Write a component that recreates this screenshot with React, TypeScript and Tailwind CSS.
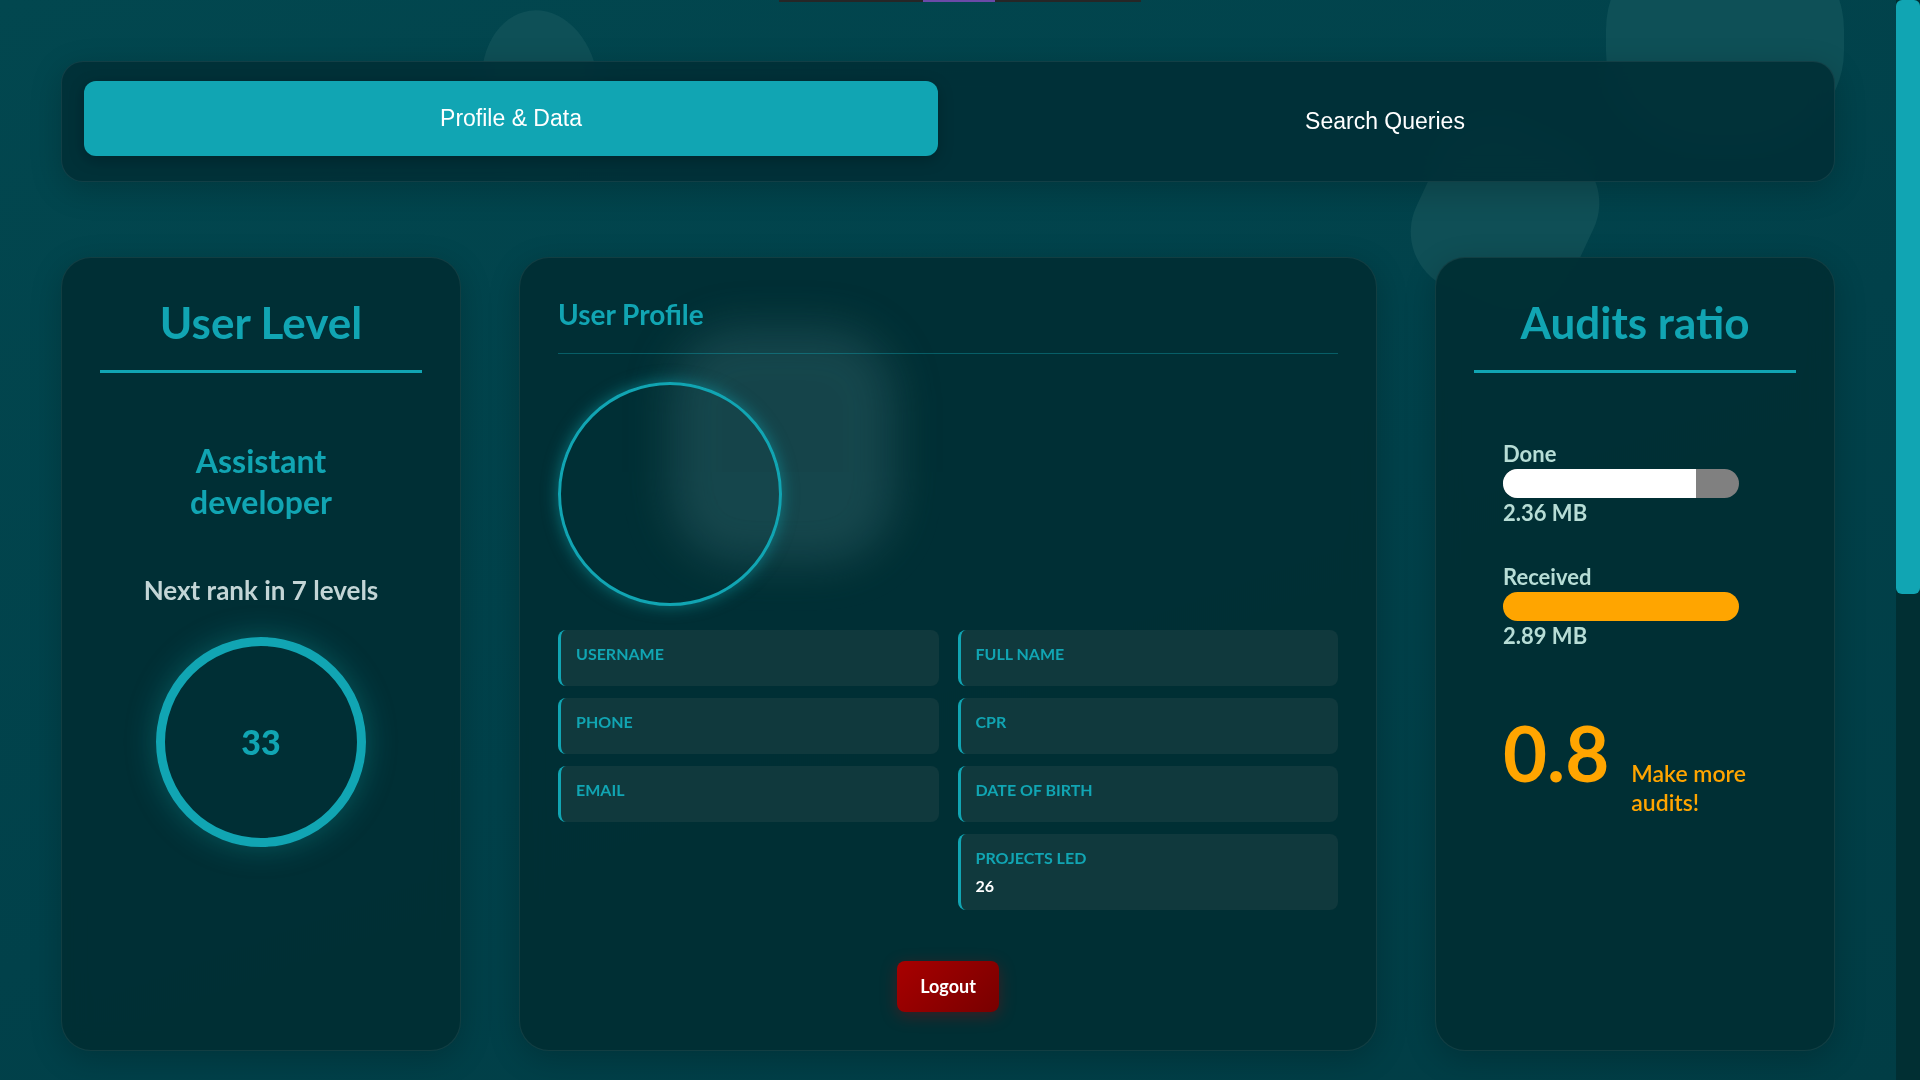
import React from "react";

function Field({ label, value }: { label: string; value?: string }) {
  return (
    <div className="flex flex-col gap-[8px] rounded-[8px] border-l-[3px] border-[#11a5b3] bg-[#10393d] pl-[15px] pr-[16px] pt-[14px] pb-[14px]">
      <span className="text-[16px] leading-[20px] font-bold uppercase text-[#11a5b3]">{label}</span>
      {value ? (
        <span className="text-[16px] leading-[20px] font-bold text-white">{value}</span>
      ) : (
        <span />
      )}
    </div>
  );
}

function Bar({ label, value, pct, fill, track }: { label: string; value: string; pct: number; fill: string; track: string }) {
  return (
    <div className="flex flex-col">
      <span className="text-[22px] leading-[26px] font-bold text-[#b7ddd6]">{label}</span>
      <div className={`mt-[2px] h-[29px] w-[236px] overflow-hidden rounded-full ${track}`}>
        <div className={`h-full ${fill}`} style={{ width: `${pct}%` }} />
      </div>
      <span className="mt-[2px] text-[22px] leading-[26px] font-bold text-[#b7ddd6]">{value}</span>
    </div>
  );
}

export default function App() {
  const done = 2.36;
  const received = 2.89;
  return (
    <div className="flex h-screen w-full overflow-hidden [font-family:Lato,'Noto_Sans',sans-serif]">
      <main className="relative flex-1 overflow-hidden bg-[linear-gradient(160deg,#02474f_0%,#01414a_55%,#013d45_100%)] px-[61px] pt-[61px]">
        {/* background blobs */}
        <div className="absolute left-[482px] top-[10px] h-[150px] w-[116px] rotate-[-8deg] rounded-[50%] bg-[#0e5057]" />
        <div className="absolute left-[1606px] top-[-70px] h-[220px] w-[238px] rounded-[45%] bg-[#0e5057]" />
        <div className="absolute left-[1420px] top-[130px] h-[175px] w-[170px] rotate-[25deg] rounded-[60px] bg-[#0f4f56]" />

        {/* loader strip */}
        <div className="absolute left-[779px] top-0 flex h-[2px] w-[362px] bg-[#262626]">
          <div className="ml-[144px] h-full w-[72px] bg-[#6b4aa8]" />
        </div>

        {/* tabs */}
        <div className="relative flex gap-[20px] rounded-[22px] border border-white/[0.07] bg-[#002f36]/90 p-[22px] shadow-[0_8px_32px_rgba(0,0,0,0.2)] backdrop-blur-md">
          <button className="h-[75px] flex-1 -translate-y-[3px] rounded-[12px] bg-[#11a5b3] text-[23px] text-white shadow-[0_4px_15px_rgba(0,0,0,0.25)] [font-family:'Liberation_Sans',Arial,sans-serif]">
            Profile &amp; Data
          </button>
          <button className="h-[75px] flex-1 rounded-[12px] text-[23px] text-white [font-family:'Liberation_Sans',Arial,sans-serif]">
            Search Queries
          </button>
        </div>

        {/* cards */}
        <div className="relative mt-[75px] grid grid-cols-[400px_1fr_400px] gap-[58px]">
          {/* User Level */}
          <section className="flex h-[794px] flex-col items-center rounded-[30px] border border-white/[0.07] bg-[#002e34]/95 p-[38px] shadow-[0_8px_32px_rgba(0,0,0,0.2)] backdrop-blur-md">
            <h2 className="w-full border-b-[3px] border-[#11a5b3] pb-[21px] text-center text-[44px] leading-[1.2] font-bold text-[#11a5b3]">
              User Level
            </h2>
            <p className="mt-[67px] w-[200px] text-center text-[32px] leading-[41px] font-bold text-[#11a5b3]">
              Assistant developer
            </p>
            <p className="mt-[49px] text-center text-[26px] leading-[39px] font-bold text-[#c3d5d6]">
              Next rank in 7 levels
            </p>
            <div className="mt-[27px] flex h-[210px] w-[210px] items-center justify-center rounded-full border-[9px] border-[#11a5b3] shadow-[0_0_30px_rgba(17,165,179,0.35)]">
              <span className="text-[34px] font-black text-[#11a5b3]">33</span>
            </div>
          </section>

          {/* User Profile */}
          <section className="relative flex h-[794px] flex-col overflow-hidden rounded-[30px] border border-white/[0.07] bg-[#002e34]/95 p-[38px] pt-[40px] shadow-[0_8px_32px_rgba(0,0,0,0.2)] backdrop-blur-md">
            <div className="pointer-events-none absolute left-[150px] top-[70px] h-[235px] w-[225px] rounded-[70px] bg-[#1b4c52] opacity-80 blur-[22px]" />
            <h2 className="relative border-b border-[#11a5b3]/40 pb-[21px] text-[28px] leading-[1.2] font-bold text-[#11a5b3]">
              User Profile
            </h2>
            <div className="relative mt-[28px] h-[224px] w-[224px] rounded-full border-[3px] border-[#11a5b3] shadow-[0_0_16px_rgba(17,165,179,0.55)]" />
            <div className="relative mt-[24px] grid grid-cols-2 gap-x-[19px] gap-y-[12px]">
              <Field label="Username" />
              <Field label="Full Name" />
              <Field label="Phone" />
              <Field label="CPR" />
              <Field label="Email" />
              <Field label="Date of Birth" />
              <div className="col-start-2">
                <Field label="Projects Led" value="26" />
              </div>
            </div>
            <button className="relative mt-[51px] self-center rounded-[8px] bg-[linear-gradient(135deg,#a80000,#780000)] px-[23px] py-[13px] text-[18px] leading-[25px] font-bold text-white shadow-[0_4px_16px_rgba(170,0,0,0.35)]">
              Logout
            </button>
          </section>

          {/* Audits ratio */}
          <section className="flex h-[794px] flex-col rounded-[30px] border border-white/[0.07] bg-[#002e34]/95 p-[38px] shadow-[0_8px_32px_rgba(0,0,0,0.2)] backdrop-blur-md">
            <h2 className="w-full border-b-[3px] border-[#11a5b3] pb-[21px] text-center text-[44px] leading-[1.2] font-bold text-[#11a5b3]">
              Audits ratio
            </h2>
            <div className="mt-[68px] flex flex-col gap-[38px] pl-[29px]">
              <Bar label="Done" value="2.36 MB" pct={(done / received) * 100} fill="bg-white" track="bg-[#808080]" />
              <Bar label="Received" value="2.89 MB" pct={100} fill="bg-[#ffa500]" track="bg-[#808080]" />
            </div>
            <div className="mt-[66px] flex items-baseline gap-[22px] pl-[29px]">
              <span className="text-[76px] leading-none font-bold text-[#ffa500]">0.8</span>
              <span className="w-[130px] text-[23px] leading-[29px] font-semibold text-[#ffa500]">Make more audits!</span>
            </div>
          </section>
        </div>
      </main>

      {/* scrollbar */}
      <aside className="w-[24px] shrink-0 bg-[#012f33]">
        <div className="h-[594px] rounded-[6px] bg-[#11a5b3]" />
      </aside>
    </div>
  );
}
